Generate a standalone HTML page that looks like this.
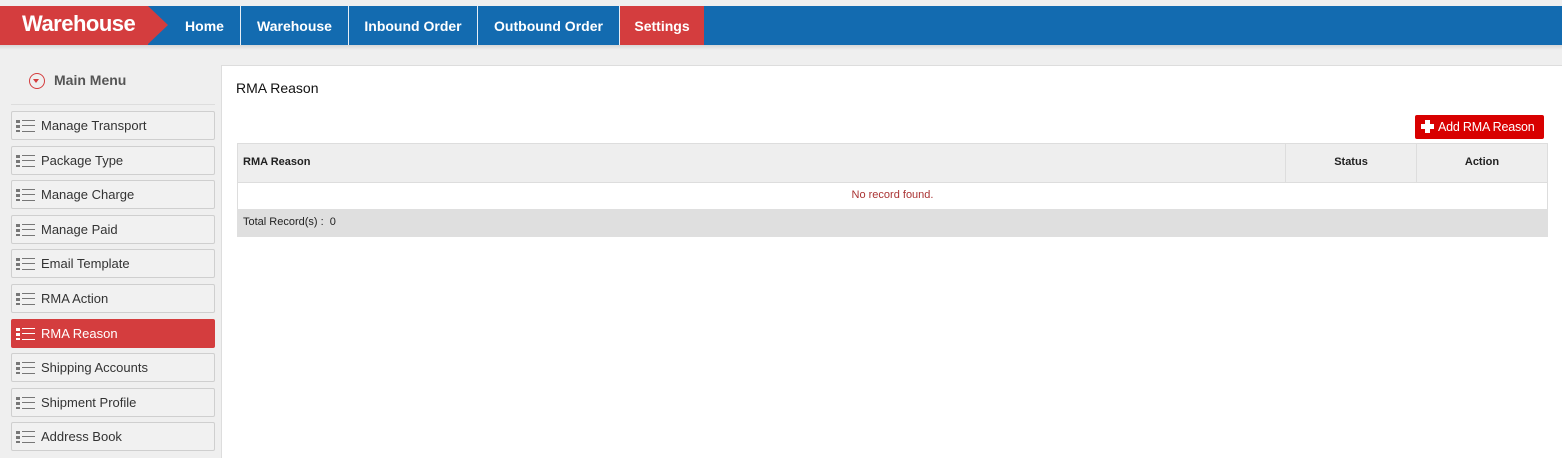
<!DOCTYPE html>
<html><head><style>
*{margin:0;padding:0;box-sizing:border-box}
body{width:1562px;height:458px;overflow:hidden;background:#efefef;font-family:"Liberation Sans",sans-serif;position:relative}
.top{position:absolute;left:0;top:6px;width:1562px;height:39px;background:#136bb0}
.shadow{position:absolute;left:0;top:45px;width:1562px;height:5px;background:linear-gradient(#d6d6d6,#efefef)}
.logo{position:absolute;left:0;top:6px;width:148px;height:39px;background:#d43d3e;color:#fff;font-weight:bold;font-size:22px;padding:5px 0 0 22px;letter-spacing:-0.5px}
.arrow{position:absolute;left:148px;top:6px;width:0;height:0;border-top:19.5px solid transparent;border-bottom:19.5px solid transparent;border-left:20px solid #d43d3e}
.nav{position:absolute;top:6px;height:39px;color:#fff;font-weight:bold;font-size:14px;line-height:41px;text-align:center;border-left:1px solid #e6eef6}
.side{position:absolute;left:11px;width:204px;height:29px;border:1px solid #cfcfcf;border-radius:2px;background:#f1f1f1;font-size:13px;color:#333;line-height:27px;padding-left:29px}
.side.act{background:#d43d3e;border-color:#d43d3e;color:#fff}
.ic{position:absolute;left:4px;top:8px;width:20px;height:12px}
.ic i{position:absolute;display:block;background:#777}
.act .ic i{background:#fff}
.panel{position:absolute;left:221px;top:65px;width:1341px;height:393px;background:#fff;border-left:1px solid #ddd;border-top:1px solid #ddd}
.t{position:absolute;font-size:12px;color:#222}
</style></head><body>
<div class="top"></div><div class="shadow"></div>
<div class="logo">Warehouse</div><div class="arrow"></div>
<div class="nav" style="left:169px;width:71px;border-left:none">Home</div>
<div class="nav" style="left:240px;width:108px">Warehouse</div>
<div class="nav" style="left:348px;width:129px">Inbound Order</div>
<div class="nav" style="left:477px;width:142px">Outbound Order</div>
<div class="nav" style="left:619px;width:85px;background:#d43d3e">Settings</div>

<div style="position:absolute;left:29px;top:73px;width:16px;height:16px;border:1.5px solid #d43d3e;border-radius:50%"><div style="position:absolute;left:3px;top:5px;border-left:3.5px solid transparent;border-right:3.5px solid transparent;border-top:4px solid #d43d3e"></div></div>
<div style="position:absolute;left:54px;top:72px;font-size:14px;color:#555;font-weight:bold">Main Menu</div>
<div style="position:absolute;left:11px;top:104px;width:204px;height:1px;background:#ddd"></div>

<div class="side" style="top:111px"><span class="ic"><i style="left:0;top:0;width:4px;height:3px"></i><i style="left:0;top:5px;width:4px;height:3px"></i><i style="left:0;top:10px;width:4px;height:2px"></i><i style="left:6px;top:0;width:13px;height:1px"></i><i style="left:6px;top:5px;width:13px;height:1px"></i><i style="left:6px;top:11px;width:13px;height:1px"></i></span>Manage Transport</div>
<div class="side" style="top:146px"><span class="ic"><i style="left:0;top:0;width:4px;height:3px"></i><i style="left:0;top:5px;width:4px;height:3px"></i><i style="left:0;top:10px;width:4px;height:2px"></i><i style="left:6px;top:0;width:13px;height:1px"></i><i style="left:6px;top:5px;width:13px;height:1px"></i><i style="left:6px;top:11px;width:13px;height:1px"></i></span>Package Type</div>
<div class="side" style="top:180px"><span class="ic"><i style="left:0;top:0;width:4px;height:3px"></i><i style="left:0;top:5px;width:4px;height:3px"></i><i style="left:0;top:10px;width:4px;height:2px"></i><i style="left:6px;top:0;width:13px;height:1px"></i><i style="left:6px;top:5px;width:13px;height:1px"></i><i style="left:6px;top:11px;width:13px;height:1px"></i></span>Manage Charge</div>
<div class="side" style="top:215px"><span class="ic"><i style="left:0;top:0;width:4px;height:3px"></i><i style="left:0;top:5px;width:4px;height:3px"></i><i style="left:0;top:10px;width:4px;height:2px"></i><i style="left:6px;top:0;width:13px;height:1px"></i><i style="left:6px;top:5px;width:13px;height:1px"></i><i style="left:6px;top:11px;width:13px;height:1px"></i></span>Manage Paid</div>
<div class="side" style="top:249px"><span class="ic"><i style="left:0;top:0;width:4px;height:3px"></i><i style="left:0;top:5px;width:4px;height:3px"></i><i style="left:0;top:10px;width:4px;height:2px"></i><i style="left:6px;top:0;width:13px;height:1px"></i><i style="left:6px;top:5px;width:13px;height:1px"></i><i style="left:6px;top:11px;width:13px;height:1px"></i></span>Email Template</div>
<div class="side" style="top:284px"><span class="ic"><i style="left:0;top:0;width:4px;height:3px"></i><i style="left:0;top:5px;width:4px;height:3px"></i><i style="left:0;top:10px;width:4px;height:2px"></i><i style="left:6px;top:0;width:13px;height:1px"></i><i style="left:6px;top:5px;width:13px;height:1px"></i><i style="left:6px;top:11px;width:13px;height:1px"></i></span>RMA Action</div>
<div class="side act" style="top:319px"><span class="ic"><i style="left:0;top:0;width:4px;height:3px"></i><i style="left:0;top:5px;width:4px;height:3px"></i><i style="left:0;top:10px;width:4px;height:2px"></i><i style="left:6px;top:0;width:13px;height:1px"></i><i style="left:6px;top:5px;width:13px;height:1px"></i><i style="left:6px;top:11px;width:13px;height:1px"></i></span>RMA Reason</div>
<div class="side" style="top:353px"><span class="ic"><i style="left:0;top:0;width:4px;height:3px"></i><i style="left:0;top:5px;width:4px;height:3px"></i><i style="left:0;top:10px;width:4px;height:2px"></i><i style="left:6px;top:0;width:13px;height:1px"></i><i style="left:6px;top:5px;width:13px;height:1px"></i><i style="left:6px;top:11px;width:13px;height:1px"></i></span>Shipping Accounts</div>
<div class="side" style="top:388px"><span class="ic"><i style="left:0;top:0;width:4px;height:3px"></i><i style="left:0;top:5px;width:4px;height:3px"></i><i style="left:0;top:10px;width:4px;height:2px"></i><i style="left:6px;top:0;width:13px;height:1px"></i><i style="left:6px;top:5px;width:13px;height:1px"></i><i style="left:6px;top:11px;width:13px;height:1px"></i></span>Shipment Profile</div>
<div class="side" style="top:422px"><span class="ic"><i style="left:0;top:0;width:4px;height:3px"></i><i style="left:0;top:5px;width:4px;height:3px"></i><i style="left:0;top:10px;width:4px;height:2px"></i><i style="left:6px;top:0;width:13px;height:1px"></i><i style="left:6px;top:5px;width:13px;height:1px"></i><i style="left:6px;top:11px;width:13px;height:1px"></i></span>Address Book</div>

<div class="panel"></div>
<div class="t" style="left:236px;top:80px;font-size:14px;color:#111">RMA Reason</div>
<div style="position:absolute;left:1415px;top:115px;width:129px;height:24px;background:#d80000;border-radius:2px;color:#fff;font-size:12.5px;line-height:24px;padding-left:23px;white-space:nowrap;letter-spacing:-0.2px">Add RMA Reason</div>
<div style="position:absolute;left:1421px;top:124px;width:13px;height:5px;background:#fff"></div>
<div style="position:absolute;left:1425px;top:120px;width:5px;height:13px;background:#fff"></div>

<div style="position:absolute;left:237px;top:143px;width:1311px;height:40px;background:#eee;border:1px solid #ddd"></div>
<div style="position:absolute;left:1285px;top:143px;width:1px;height:40px;background:#ddd"></div>
<div style="position:absolute;left:1416px;top:143px;width:1px;height:40px;background:#ddd"></div>
<div class="t" style="left:243px;top:156px;font-weight:bold;font-size:11px">RMA Reason</div>
<div class="t" style="left:1286px;width:130px;text-align:center;top:156px;font-weight:bold;font-size:11px">Status</div>
<div class="t" style="left:1417px;width:130px;text-align:center;top:156px;font-weight:bold;font-size:11px">Action</div>
<div style="position:absolute;left:237px;top:182px;width:1311px;height:28px;border:1px solid #ddd;border-top:none"></div>
<div class="t" style="left:237px;width:1311px;text-align:center;top:189px;font-size:11px;color:#a33">No record found.</div>
<div style="position:absolute;left:237px;top:209px;width:1311px;height:28px;background:#dfdfdf"></div>
<div class="t" style="left:243px;top:216px;font-size:11px">Total Record(s) :&nbsp; 0</div>
</body></html>
